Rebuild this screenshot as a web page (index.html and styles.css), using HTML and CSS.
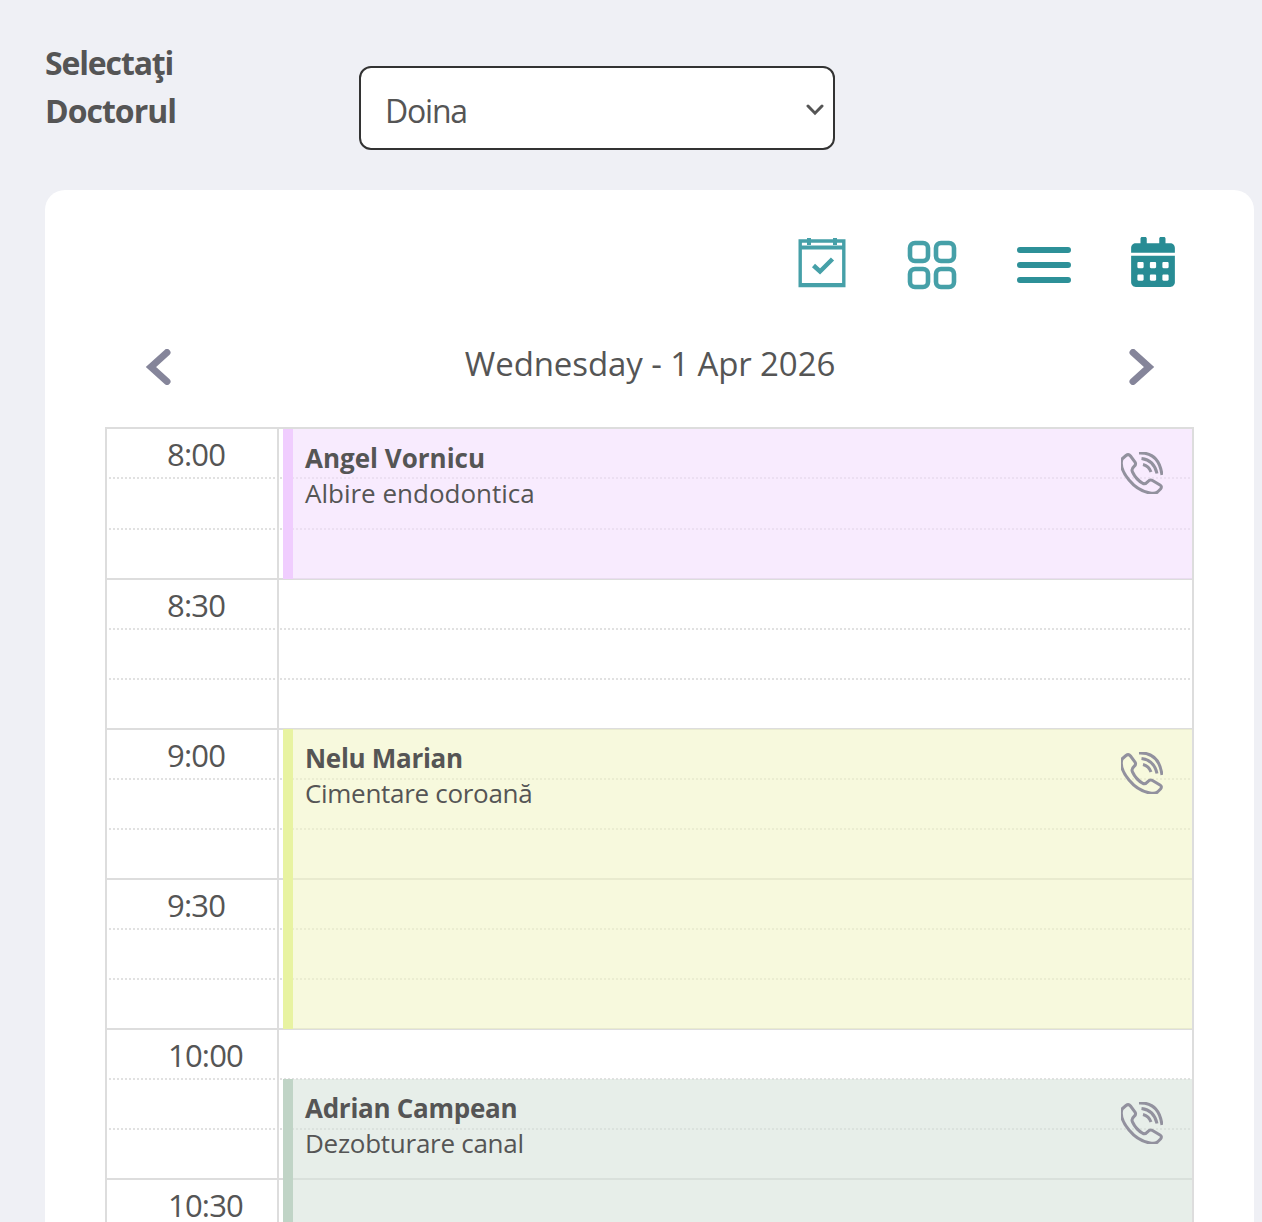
FILE: index.html
```html
<!DOCTYPE html>
<html lang="en">
<head>
    <meta charset="UTF-8">
    <meta name="viewport" content="width=device-width, initial-scale=1.0">
    <title>Programări</title>
    <link rel="stylesheet" href="styles.css">
</head>
<body>

    <svg class="sprite" width="0" height="0">
        <symbol id="phone" viewBox="0 0 42 42">
            <path d="M1 7 L5 3.5 Q7.500 1.500 9.500 4 L14 10 Q15.500 12.500 13 14.500 Q10 17 11.500 20 Q15 27.500 22 31.500 Q24.500 32.500 27 29.500 Q29 27 31.500 28.500 L39 33 Q41.500 34.500 39.500 37 L36.500 40 Q34 42 29 41 Q17 39 8 28 Q-2 16 1 7 Z"/>
            <path d="M22 12.500 Q28 14 30 20"/>
            <path d="M20.500 6.500 Q33 8 36 21.500"/>
            <path d="M18 1 Q38 0 41 23"/>
        </symbol>
    </svg>

    <div class="selector">
        <label for="doctor"><span class="l1">Selectaţi</span><br><span class="l2">Doctorul</span></label>
        <div class="select" id="doctor">
            <span>Doina</span>
            <svg width="18" height="12" viewBox="0 0 18 12"><path d="M2 2 L9 9.200 L16 2"/></svg>
        </div>
    </div>

    <div class="card">
        <div class="views">
            <svg class="view-day" width="48" height="51" viewBox="0 0 48 51">
                <path d="M2.200 4 H45.800 V48.500 H2.200 Z" stroke-width="3.400"/>
                <path d="M1 10.500 H47 M2 48 H46 M11 1 V8 M37 1 V8" stroke-width="4"/>
                <path d="M15.500 28.500 L22 34.500 L34.500 22" stroke-width="4.500"/>
            </svg>
            <svg class="view-grid" width="50" height="50" viewBox="0 0 50 50">
                <rect x="3" y="3" width="18" height="18" rx="5"/>
                <rect x="29" y="3" width="18" height="18" rx="5"/>
                <rect x="3" y="29" width="18" height="18" rx="5"/>
                <rect x="29" y="29" width="18" height="18" rx="5"/>
            </svg>
            <svg class="view-list" width="56" height="38" viewBox="0 0 56 38">
                <path d="M4 4 H52 M4 19 H52 M4 34 H52"/>
            </svg>
            <svg class="view-month" width="44" height="50" viewBox="0 0 448 512">
                <path d="M0 464c0 26.500 21.500 48 48 48h352c26.500 0 48-21.500 48-48V192H0v272zm320-196c0-6.600 5.400-12 12-12h40c6.600 0 12 5.400 12 12v40c0 6.600-5.400 12-12 12h-40c-6.600 0-12-5.400-12-12v-40zm0 128c0-6.600 5.400-12 12-12h40c6.600 0 12 5.400 12 12v40c0 6.600-5.400 12-12 12h-40c-6.600 0-12-5.400-12-12v-40zM192 268c0-6.600 5.400-12 12-12h40c6.600 0 12 5.400 12 12v40c0 6.600-5.400 12-12 12h-40c-6.600 0-12-5.400-12-12v-40zm0 128c0-6.600 5.400-12 12-12h40c6.600 0 12 5.400 12 12v40c0 6.600-5.400 12-12 12h-40c-6.600 0-12-5.400-12-12v-40zM64 268c0-6.600 5.400-12 12-12h40c6.600 0 12 5.400 12 12v40c0 6.600-5.400 12-12 12H76c-6.600 0-12-5.400-12-12v-40zm0 128c0-6.600 5.400-12 12-12h40c6.600 0 12 5.400 12 12v40c0 6.600-5.400 12-12 12H76c-6.600 0-12-5.400-12-12v-40zM400 64h-48V16c0-8.800-7.200-16-16-16h-32c-8.800 0-16 7.200-16 16v48H160V16c0-8.800-7.200-16-16-16h-32c-8.800 0-16 7.200-16 16v48H48C21.500 64 0 85.500 0 112v48h448v-48c0-26.500-21.500-48-48-48z"/>
            </svg>
        </div>

        <div class="date-nav">
            <svg width="27" height="36" viewBox="0 0 27 36"><path d="M22 3.500 L6 18 L22 32.500"/></svg>
            <span class="date">Wednesday - 1 Apr 2026</span>
            <svg width="27" height="36" viewBox="0 0 27 36"><path d="M5 3.500 L21 18 L5 32.500"/></svg>
        </div>

        <div class="planner">
            <div class="slot full first"><span class="time">8:00</span><span class="cell"></span></div>
            <div class="slot tall"><span class="time"></span><span class="cell"></span></div>
            <div class="slot"><span class="time"></span><span class="cell"></span></div>
            <div class="slot full"><span class="time">8:30</span><span class="cell"></span></div>
            <div class="slot"><span class="time"></span><span class="cell"></span></div>
            <div class="slot"><span class="time"></span><span class="cell"></span></div>
            <div class="slot full"><span class="time">9:00</span><span class="cell"></span></div>
            <div class="slot"><span class="time"></span><span class="cell"></span></div>
            <div class="slot"><span class="time"></span><span class="cell"></span></div>
            <div class="slot full"><span class="time">9:30</span><span class="cell"></span></div>
            <div class="slot"><span class="time"></span><span class="cell"></span></div>
            <div class="slot"><span class="time"></span><span class="cell"></span></div>
            <div class="slot full"><span class="time ten">10:00</span><span class="cell"></span></div>
            <div class="slot"><span class="time"></span><span class="cell"></span></div>
            <div class="slot"><span class="time"></span><span class="cell"></span></div>
            <div class="slot full"><span class="time ten">10:30</span><span class="cell"></span></div>

            <div class="event angel">
                <div><strong>Angel Vornicu</strong><p>Albire endodontica</p></div>
                <svg class="phone"><use href="#phone"/></svg>
            </div>
            <div class="event nelu">
                <div><strong>Nelu Marian</strong><p>Cimentare coroană</p></div>
                <svg class="phone"><use href="#phone"/></svg>
            </div>
            <div class="event adrian">
                <div><strong>Adrian Campean</strong><p>Dezobturare canal</p></div>
                <svg class="phone"><use href="#phone"/></svg>
            </div>
        </div>
    </div>

</body>
</html>
```

FILE: styles.css
```css
* {
    box-sizing: border-box;
}
body {
    margin: 0;
    height: 1222px;
    overflow: hidden;
    background-color: #eff0f5;
    color: #555;
    font-family: "Open Sans", "Noto Sans", sans-serif;
}
svg {
    display: block;
    flex: none;
}
.sprite {
    position: absolute;
}
.selector {
    display: flex;
    height: 190px;
    padding: 39px 0 0 45px;
}
.selector label {
    width: 314px;
    font-size: 32px;
    line-height: 48px;
    font-weight: bold;
    white-space: nowrap;
}
.l1 {
    letter-spacing: -1.15px;
}
.l2 {
    letter-spacing: -1px;
}
.select {
    display: flex;
    align-items: center;
    justify-content: space-between;
    width: 476px;
    height: 84px;
    margin-top: 27px;
    padding: 4px 9px 0 24px;
    background-color: white;
    border: 2px solid #333;
    border-radius: 12px;
    font-size: 32px;
    letter-spacing: -1.2px;
}
.select svg {
    fill: none;
    stroke: #555;
    stroke-width: 3;
    stroke-linecap: round;
}
.card {
    width: 1209px;
    height: 1032px;
    margin-left: 45px;
    padding: 47px 60px 0;
    background-color: white;
    border-radius: 20px 20px 0 0;
}
.views {
    display: flex;
    justify-content: flex-end;
    align-items: flex-start;
    height: 112px;
    padding-right: 19px;
    fill: none;
    stroke: #46a0a8;
}
.view-day {
    margin-right: 61px;
}
.view-grid {
    margin: 3px 59px 0 0;
    stroke-width: 4.6;
}
.view-list {
    margin: 9px 59px 0 0;
    stroke: #2d9098;
    stroke-width: 6;
    stroke-linecap: round;
}
.view-month {
    fill: #288c94;
    stroke: none;
}
.date-nav {
    display: flex;
    justify-content: space-between;
    height: 78px;
    padding: 0 39px 0 40px;
    fill: none;
    stroke: #85859a;
    stroke-width: 7;
    stroke-linecap: round;
}
.date-nav .date {
    margin-top: -9px;
    font-size: 33px;
    line-height: 48px;
    letter-spacing: -.1px;
}
.planner {
    position: relative;
    border: 2px solid #ddd;
    border-width: 0 2px;
}
.slot {
    display: flex;
    height: 50px;
}
.slot.tall {
    height: 51px;
}
.slot span {
    background: repeating-linear-gradient(90deg, #e1e1e1 0 2px, transparent 2px 4px) 2px 0 / calc(100% - 4px) 2px no-repeat;
}
.slot.full span {
    background: none;
    border-top: 2px solid #ddd;
}
.slot .time {
    width: 170px;
    padding-left: 60px;
    font-size: 31px;
    line-height: 51px;
    letter-spacing: -.8px;
}
.slot .ten {
    padding-left: 61px;
}
.slot .cell {
    flex: 1;
    box-shadow: inset 2px 0 #ddd;
    background-position: 3px 0;
}
.event {
    position: absolute;
    left: 176px;
    right: 0;
    display: flex;
    justify-content: space-between;
    padding: 12px 29px 0 12px;
    border-left: 10px solid;
    background-clip: padding-box;
    font-size: 26px;
    line-height: 35px;
}
.event p {
    margin: 0;
}
.angel {
    top: 2px;
    height: 150px;
    background-color: rgba(243, 222, 253, .6);
    border-color: #f0cdfe;
}
.nelu {
    top: 302px;
    height: 300px;
    background-color: rgba(242, 245, 198, .6);
    border-color: #e8f3a1;
}
.nelu strong,
.nelu p {
    letter-spacing: -.3px;
}
.adrian {
    top: 652px;
    height: 143px;
    background-color: rgba(215, 227, 218, .6);
    border-color: #c0d4c6;
}
.adrian strong,
.adrian p {
    letter-spacing: -.27px;
}
.phone {
    width: 42px;
    height: 42px;
    margin-top: 11px;
    fill: none;
    stroke: #92919e;
    stroke-width: 3;
}
```
